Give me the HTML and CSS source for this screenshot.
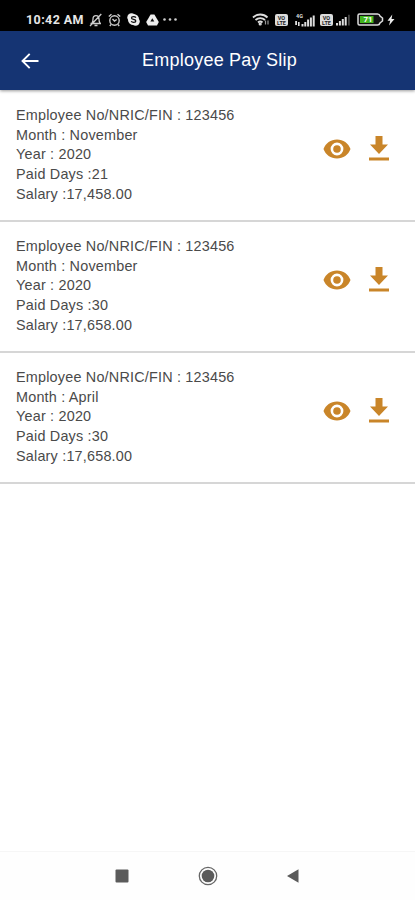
FILE: index.html
```html
<!DOCTYPE html>
<html lang="en">
<head>
  <meta charset="UTF-8">
  <meta name="viewport" content="width=device-width, initial-scale=1.0">
  <title>Employee Pay Slip</title>
  <link rel="stylesheet" href="styles.css">
</head>
<body>

  <svg class="sprite">
    <symbol id="eye" viewBox="0 0 28 20">
      <path fill-rule="evenodd" d="M14 .5C7.7.5 2.600 4.300.500 10C2.600 15.700 7.700 19.500 14 19.500S25.400 15.700 27.500 10C25.400 4.300 20.300.500 14 .500zM14 16.400a6.400 6.400 0 1 1 0-12.800a6.400 6.400 0 0 1 0 12.800z"/>
      <circle cx="14" cy="10" r="3.8"/>
    </symbol>
    <symbol id="download" viewBox="0 0 20 25">
      <path d="M6.500 0h7v8.500H19L10 18L1 8.500h5.500zM0 21.500h20v3H0z"/>
    </symbol>
    <symbol id="volte" viewBox="0 0 13 12">
      <rect width="13" height="12" rx="2" fill="#ddd"/>
      <text x="6.5" y="5.7" class="tiny dark">VO</text>
      <text x="6.5" y="10.8" class="tiny dark">LTE</text>
    </symbol>
  </svg>

  <div class="status-bar">
    <span class="clock">10:42 AM</span>
    <div class="status-left">
      <!-- muted bell -->
      <svg width="13" height="14" viewBox="0 0 13 14" fill="none" stroke="#ccc" stroke-width="1.3">
        <path d="M1.500 10.500h10.500M3 10c1-1 1-2 1-4c0-2 1-3.300 3-3.300s3 1.300 3 3.300c0 2 0 3 1 4M5.500 12.500h3M12.300 1L1 13"/>
      </svg>
      <!-- alarm -->
      <svg width="13" height="14" viewBox="0 0 13 14" fill="none" stroke="#ccc" stroke-width="1.4">
        <circle cx="6.5" cy="7.5" r="4.7"/>
        <path d="M.8 3.500L3.500 1.200M12.200 3.500L9.500 1.200M4.500 6l2 2l2.200-1.500M3 11.500L1.800 13M10 11.500L11.200 13"/>
      </svg>
      <!-- skype -->
      <svg width="13" height="13" viewBox="0 0 13 13">
        <circle cx="4.5" cy="4.5" r="4.2" fill="#eee"/>
        <circle cx="6.5" cy="6.5" r="5.5" fill="#eee"/>
        <circle cx="8.6" cy="8.6" r="4.2" fill="#eee"/>
        <path d="M8.900 4.600C8 3.200 4.500 3.200 4.500 5c0 1.900 4.300 1 4.300 3c0 1.900-3.700 1.900-4.600.3" fill="none" stroke="#111" stroke-width="1.3"/>
      </svg>
      <!-- drive -->
      <svg width="13" height="12" viewBox="0 0 13 12">
        <path d="M4.600.5h3.800L12.800 8l-1.800 3.500H2L.2 8z" fill="#eee"/>
        <path d="M6.300 4.200L8.300 7.600H4.400z" fill="#111"/>
      </svg>
      <svg class="dots" width="16" height="3" viewBox="0 0 16 3" fill="#ccc">
        <circle cx="1.5" cy="1.5" r="1.3"/>
        <circle cx="7" cy="1.5" r="1.3"/>
        <circle cx="12.500" cy="1.5" r="1.3"/>
      </svg>
    </div>
    <div class="status-right">
      <!-- wifi -->
      <svg width="18" height="13" viewBox="0 0 18 13" fill="none" stroke="#ddd" stroke-width="1.8">
        <path d="M1 4.500c4-4 10.500-4 14.500 0M3.500 7c2.700-2.600 6.800-2.600 9.500 0M6 9.500c1.500-1.400 3-1.400 4.500 0"/>
        <path d="M13.500 11.500V7.500M16 7.500v4" stroke="#999" stroke-width="1.2"/>
        <circle cx="8.2" cy="11" r=".7"/>
      </svg>
      <svg class="volte" width="13" height="12"><use href="#volte"/></svg>
      <!-- 4G signal -->
      <svg class="signal" width="21" height="14" viewBox="0 0 21 14" fill="#ddd">
        <text x="5.5" y="5" class="tiny">4G</text>
        <path d="M1.200 8h1.800v4H1.200zM4 9h1.600v4H4zM7.500 11h2v2.500h-2zM10.300 9h2v4.500h-2zM13.100 6.500h2v7h-2zM15.900 4.500h2v9h-2zM18.700 2.500h2v11h-2z"/>
      </svg>
      <svg class="volte2" width="13" height="12"><use href="#volte"/></svg>
      <!-- second sim signal -->
      <svg class="signal2" width="15" height="12" viewBox="0 0 15 12" fill="#ddd">
        <path d="M0 9h2v2.500H0zM2.900 7h2v4.500h-2zM5.800 5h2v6.500h-2zM8.700 3h2v8.500h-2z"/>
        <path d="M12 .8h1.800v10.700H12z" fill="#444"/>
      </svg>
      <!-- battery -->
      <svg class="battery" width="27" height="13" viewBox="0 0 27 13">
        <path d="M2.500 1h18q2 0 2.500 2l2.500 2v3L23 10q-.5 2-2.500 2h-18Q1 12 1 10.500v-8Q1 1 2.500 1z" fill="#111" stroke="#ddd" stroke-width="1.5"/>
        <path d="M3 3h13.500v7H3z" fill="#42b51e"/>
        <text x="11" y="9.300" class="level">71</text>
      </svg>
      <svg class="bolt" width="8" height="12" viewBox="0 0 8 12">
        <path d="M5.300.5L.5 6.800h2.700L2 11.500L7.500 5H4.500z" fill="#eee"/>
      </svg>
    </div>
  </div>

  <header class="app-bar">
    <svg class="back" width="18" height="16" viewBox="0 0 18 16">
      <path d="M17.500 8H1.500M8.700.8L1.500 8l7.200 7.200" fill="none" stroke="#fff" stroke-width="1.9"/>
    </svg>
    <h1>Employee Pay Slip</h1>
  </header>

  <main class="slip-list">
    <div class="slip">
      <div class="slip-info">
        <p>Employee No/NRIC/FIN : 123456</p>
        <p>Month : November</p>
        <p>Year : 2020</p>
        <p>Paid Days :21</p>
        <p>Salary :17,458.00</p>
      </div>
      <div class="slip-actions">
        <svg class="eye"><use href="#eye"/></svg>
        <svg class="download"><use href="#download"/></svg>
      </div>
    </div>
    <div class="slip">
      <div class="slip-info">
        <p>Employee No/NRIC/FIN : 123456</p>
        <p>Month : November</p>
        <p>Year : 2020</p>
        <p>Paid Days :30</p>
        <p>Salary :17,658.00</p>
      </div>
      <div class="slip-actions">
        <svg class="eye"><use href="#eye"/></svg>
        <svg class="download"><use href="#download"/></svg>
      </div>
    </div>
    <div class="slip">
      <div class="slip-info">
        <p>Employee No/NRIC/FIN : 123456</p>
        <p>Month : April</p>
        <p>Year : 2020</p>
        <p>Paid Days :30</p>
        <p>Salary :17,658.00</p>
      </div>
      <div class="slip-actions">
        <svg class="eye"><use href="#eye"/></svg>
        <svg class="download"><use href="#download"/></svg>
      </div>
    </div>
  </main>

  <nav class="nav-bar">
    <svg width="20" height="20" viewBox="0 0 20 20"><rect x="3.5" y="3.5" width="13" height="13" rx="1" fill="#5b5b5b"/></svg>
    <svg width="20" height="20" viewBox="0 0 20 20">
      <circle cx="10" cy="10" r="8.7" fill="none" stroke="#666" stroke-width="1.3"/>
      <circle cx="10" cy="10" r="6.3" fill="#5b5b5b"/>
    </svg>
    <svg width="20" height="20" viewBox="0 0 20 20"><path d="M3 10L14.500 3.200v13.600z" fill="#5b5b5b"/></svg>
  </nav>

</body>
</html>
```
FILE: styles.css
```css
* {
  box-sizing: border-box;
}
body {
  margin: 0;
  height: 900px;
  display: flex;
  flex-direction: column;
  background: #fff;
  color: #4a4a4a;
  font-family: "Liberation Sans", Arial, sans-serif;
  overflow: hidden;
}
svg {
  display: block;
  flex: none;
}
.sprite {
  display: none;
}
.status-bar {
  display: flex;
  align-items: center;
  height: 31px;
  padding: 8px 20px 0 26px;
  background: #000;
}
.clock {
  width: 63px;
  color: #e6e6e6;
  font-family: Roboto, sans-serif;
  font-size: 12.5px;
  font-weight: bold;
  letter-spacing: 0.4px;
  white-space: nowrap;
}
.status-left {
  display: flex;
  align-items: center;
  gap: 6px;
}
.dots {
  margin-left: -2px;
}
.status-right {
  display: flex;
  align-items: center;
  margin-left: auto;
}
.volte {
  margin-left: 5px;
}
.signal {
  margin-left: 6px;
}
.volte2 {
  margin-left: 5px;
}
.signal2 {
  margin-left: 3px;
}
.battery {
  margin-left: 6px;
}
.bolt {
  margin-left: 3px;
}
.tiny {
  font-family: Roboto, sans-serif;
  font-size: 5.5px;
  font-weight: bold;
  text-anchor: middle;
}
.dark {
  fill: #222;
}
.level {
  fill: #fff;
  font-family: Roboto, sans-serif;
  font-size: 8px;
  font-weight: bold;
  text-anchor: middle;
}
.app-bar {
  display: grid;
  grid-template-columns: 21px 1fr 21px;
  align-items: center;
  height: 59px;
  padding: 0 20px;
  background: #153473;
  color: #fff;
  box-shadow: 0 1px 3px rgba(0, 0, 0, 0.4);
}
.app-bar h1 {
  margin: 0;
  padding-left: 24px;
  font-size: 18px;
  font-weight: normal;
  letter-spacing: 0.22px;
  text-align: center;
}
.back {
  margin-left: 1px;
}
.slip-list {
  flex: 1;
}
.slip {
  display: flex;
  justify-content: space-between;
  height: 131px;
  padding: 15px 26px 0 16px;
  border-bottom: 2px solid #d6d6d6;
}
.slip:first-child {
  height: 132px;
  padding-top: 16px;
}
.slip-info p {
  margin: 0;
  font-size: 14.4px;
  line-height: 19.7px;
  letter-spacing: 0.2px;
}
.slip-actions {
  display: flex;
  align-items: center;
  gap: 18px;
  height: 25px;
  margin-top: 30px;
  fill: #c98529;
}
.eye {
  width: 28px;
  height: 20px;
}
.download {
  width: 20px;
  height: 25px;
}
.nav-bar {
  display: flex;
  justify-content: center;
  gap: 66px;
  height: 49px;
  padding-top: 14px;
  border-top: 1px solid #f6f6f6;
  background: #fefefe;
}
```
